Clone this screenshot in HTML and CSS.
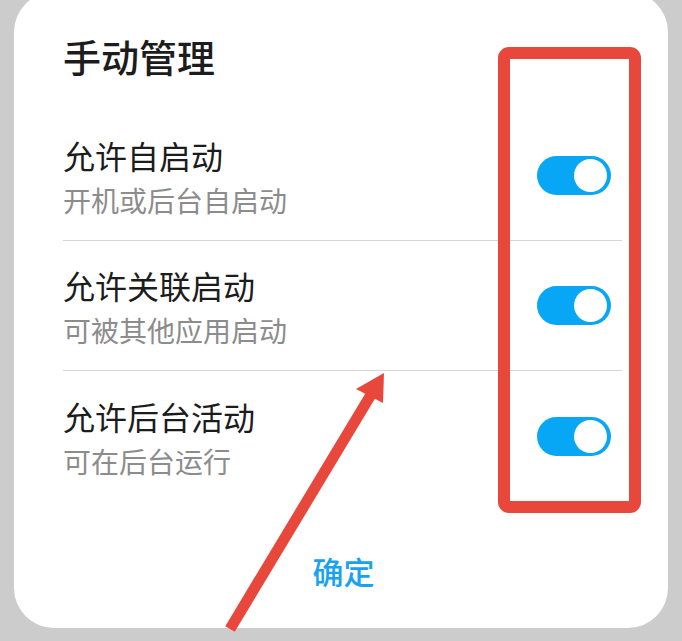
FILE: index.html
```html
<!DOCTYPE html>
<html lang="zh-CN">
<head>
<meta charset="utf-8">
<title>手动管理</title>
<link rel="stylesheet" href="styles.css">
</head>
<body>
<div class="page">
  <div class="card">
    <h1 class="heading">手动管理</h1>
    <div class="list">
      <div class="row">
        <div class="text">
          <div class="title">允许自启动</div>
          <div class="sub">开机或后台自启动</div>
        </div>
        <div class="toggle on"><span class="knob"></span></div>
      </div>
      <div class="row">
        <div class="text">
          <div class="title">允许关联启动</div>
          <div class="sub">可被其他应用启动</div>
        </div>
        <div class="toggle on"><span class="knob"></span></div>
      </div>
      <div class="row last">
        <div class="text">
          <div class="title">允许后台活动</div>
          <div class="sub">可在后台运行</div>
        </div>
        <div class="toggle on"><span class="knob"></span></div>
      </div>
    </div>
    <div class="footer">
      <span class="ok">确定</span>
    </div>
  </div>
  <svg class="annot" width="682" height="641" viewBox="0 0 682 641" aria-hidden="true">
    <rect x="504" y="53" width="131" height="454" rx="5" ry="5" fill="none" stroke="#e8473b" stroke-width="12"/>
    <line x1="230" y1="629" x2="372" y2="393" stroke="#e8473b" stroke-width="11"/>
    <polygon points="384,373 356,389 383,403" fill="#e8473b"/>
  </svg>
</div>
</body>
</html>
```
FILE: styles.css
```css
html, body {
  margin: 0;
  padding: 0;
}
body {
  background: #cccccc;
  width: 682px;
  height: 641px;
  overflow: hidden;
  font-family: "Noto Sans CJK SC", "Noto Sans", sans-serif;
}
.page {
  position: relative;
  display: flow-root;
  width: 682px;
  height: 641px;
  padding: 0 14px;
  box-sizing: border-box;
}
.card {
  margin-top: -8px;
  background: #ffffff;
  border-radius: 40px;
  height: 636px;
  box-sizing: border-box;
  padding: 38px 46px 0 49px;
}
.heading {
  margin: 0 0 29px 0;
  font-size: 38px;
  line-height: 52px;
  font-weight: 500;
  color: #1c1c1c;
}
.row {
  height: 130px;
  box-sizing: border-box;
  border-bottom: 1px solid #d6d6d6;
  display: flex;
  align-items: center;
  justify-content: space-between;
}
.row.last {
  border-bottom: none;
}
.text {
  padding-top: 5px;
}
.title {
  font-size: 32px;
  line-height: 44px;
  color: #1c1c1c;
}
.sub {
  font-size: 28px;
  line-height: 46px;
  color: #8c8c8c;
}
.toggle {
  width: 74px;
  height: 39px;
  border-radius: 20px;
  background: #cfcfcf;
  margin-right: 11px;
  position: relative;
  box-sizing: border-box;
}
.toggle.on {
  background: #08a7f5;
}
.knob {
  position: absolute;
  top: 3px;
  right: 4px;
  width: 33px;
  height: 33px;
  border-radius: 50%;
  background: #ffffff;
}
.footer {
  margin-top: 48px;
  display: flex;
  justify-content: center;
}
.ok {
  font-size: 31px;
  line-height: 44px;
  font-weight: 500;
  color: #17a3f0;
  margin-left: 2px;
}
.annot {
  position: absolute;
  left: 0;
  top: 0;
  pointer-events: none;
}
```
